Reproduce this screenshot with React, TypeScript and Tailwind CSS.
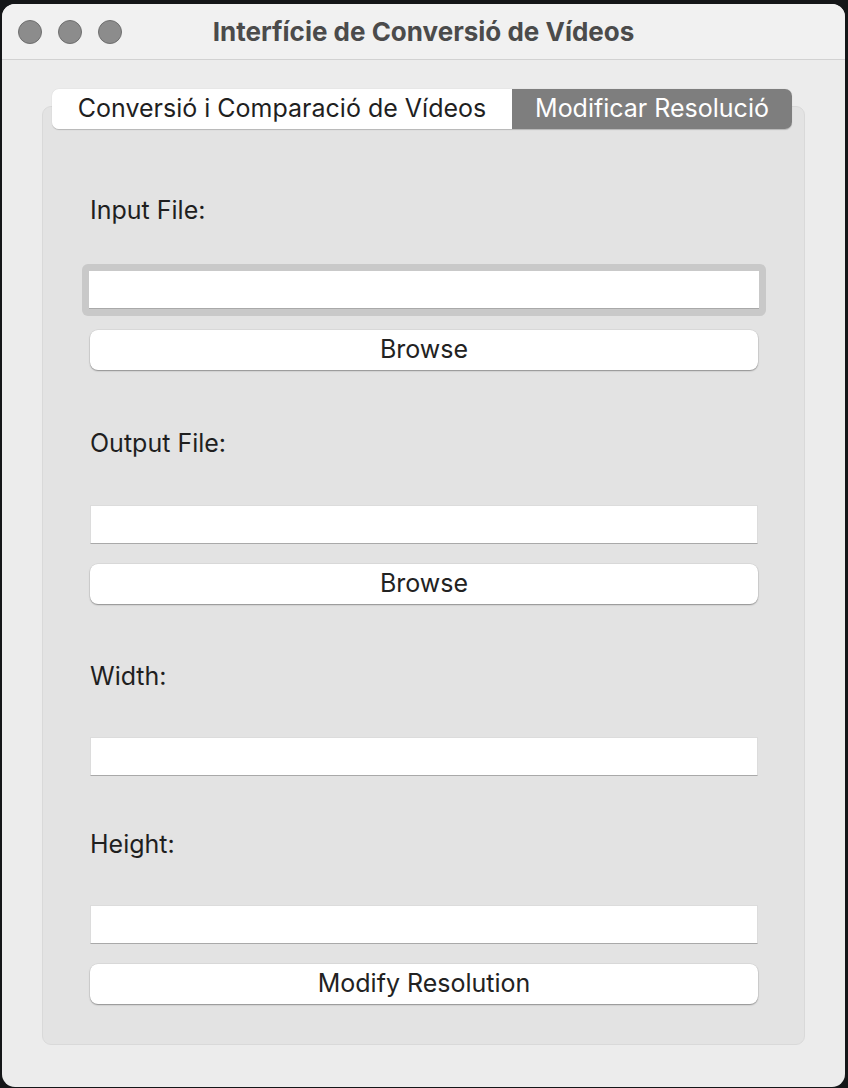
import React from "react";

const font = { fontFamily: "Inter, 'Noto Sans', 'Liberation Sans', sans-serif" };

function Field({ focused = false }: { focused?: boolean }) {
  if (focused) {
    return (
      <div className="mx-[-8px] rounded-[6px] bg-[#c9c9c9] p-[7px]">
        <div className="h-[38px] bg-white border-b border-b-[#a9a9a9]" />
      </div>
    );
  }
  return <div className="h-[39px] bg-white border border-[#dcdcdc] border-b-[#a9a9a9]" />;
}

function Btn({ label }: { label: string }) {
  return (
    <div className="flex h-[40px] items-center justify-center rounded-[8px] bg-white text-[25px] text-[#222] shadow-[0_1px_1.5px_rgba(0,0,0,0.35),0_0_0_0.5px_rgba(0,0,0,0.08)]">
      {label}
    </div>
  );
}

function Label({ text }: { text: string }) {
  return <div className="h-[28px] text-[25px] leading-[28px] text-[#1f1f1f]">{text}</div>;
}

export default function App() {
  return (
    <div className="h-[1088px] w-[848px] bg-[#141618] pt-[4px] pl-[2px] pr-[3px] pb-[1px]" style={font}>
      <div className="flex h-full flex-col overflow-hidden rounded-[13px] bg-[#ececec]">
        {/* title bar */}
        <div className="relative flex h-[56px] shrink-0 items-center border-b border-[#d2d2d2] bg-[#f1f1f1]">
          <div className="ml-[16px] flex gap-[16px]">
            <div className="h-[24px] w-[24px] rounded-full border border-[#6f6f6f] bg-[#8c8c8c]" />
            <div className="h-[24px] w-[24px] rounded-full border border-[#6f6f6f] bg-[#8c8c8c]" />
            <div className="h-[24px] w-[24px] rounded-full border border-[#6f6f6f] bg-[#8c8c8c]" />
          </div>
          <div className="absolute inset-0 flex items-center justify-center text-[26px] font-bold text-[#4b4b4b]">
            Interfície de Conversió de Vídeos
          </div>
        </div>

        {/* content */}
        <div className="relative flex-1 px-[40px] pt-[46px]">
          {/* panel */}
          <div className="h-[939px] rounded-[9px] border border-[#d9d9d9] bg-[#e3e3e3] pl-[47px] pr-[46px] pt-[89px]">
            <Label text="Input File:" />
            <div className="mt-[40px]">
              <Field focused />
            </div>
            <div className="mt-[14px]">
              <Btn label="Browse" />
            </div>
            <div className="mt-[59px]">
              <Label text="Output File:" />
            </div>
            <div className="mt-[48px]">
              <Field />
            </div>
            <div className="mt-[20px]">
              <Btn label="Browse" />
            </div>
            <div className="mt-[58px]">
              <Label text="Width:" />
            </div>
            <div className="mt-[47px]">
              <Field />
            </div>
            <div className="mt-[54px]">
              <Label text="Height:" />
            </div>
            <div className="mt-[47px]">
              <Field />
            </div>
            <div className="mt-[20px]">
              <Btn label="Modify Resolution" />
            </div>
          </div>

          {/* tabs overlay */}
          <div className="absolute left-[50px] top-[29px] flex h-[40px] overflow-hidden rounded-[7px] text-[25px] shadow-[0_0.5px_1px_rgba(0,0,0,0.2)]">
            <div className="flex w-[460px] items-center justify-center bg-white text-[#1f1f1f]">
              Conversió i Comparació de Vídeos
            </div>
            <div className="flex w-[280px] items-center justify-center bg-[#7e7e7e] text-white">
              Modificar Resolució
            </div>
          </div>
        </div>
      </div>
    </div>
  );
}
